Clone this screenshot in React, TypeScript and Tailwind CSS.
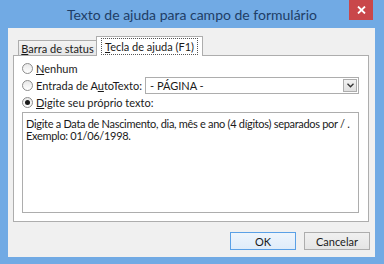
import React from "react";

function Radio({ checked }: { checked?: boolean }) {
  return (
    <span className="flex h-[11px] w-[11px] shrink-0 items-center justify-center rounded-full border border-[#8c8c8c] bg-gradient-to-b from-[#e8e8e8] to-[#ffffff]">
      {checked && <span className="h-[5px] w-[5px] rounded-full bg-[#1a1a1a]" />}
    </span>
  );
}

export default function App() {
  return (
    <div
      className="flex h-[264px] w-[384px] flex-col whitespace-nowrap bg-[#71aae4] text-[#1a1a1a]"
      style={{ fontFamily: 'Lato, "Liberation Sans", sans-serif' }}
    >
      {/* title bar */}
      <div className="relative flex h-[28px] shrink-0 items-center justify-center">
        <span className="pt-[1px] text-[14px] leading-none text-[#1e3d66]">
          Texto de ajuda para campo de formulário
        </span>
        <div className="absolute right-[11px] top-0 flex h-[20px] w-[24px] items-center justify-center bg-[#c9474a]">
          <svg width="9" height="8" viewBox="0 0 9 8">
            <path d="M1 0.5 L8 7.5 M8 0.5 L1 7.5" stroke="#ffffff" strokeWidth="1.8" />
          </svg>
        </div>
      </div>

      {/* client area */}
      <div className="ml-[8px] mr-[9px] flex h-[229px] flex-col bg-[#f0f0f0] pl-[5px] pr-[6px] pt-[8px] text-[11px] leading-none">
        {/* tabs */}
        <div className="relative z-10 flex h-[19px] items-end pl-[5px]">
          <div className="flex h-[15px] w-[79px] items-center justify-center border border-b-0 border-[#adadad] bg-gradient-to-b from-[#f3f3f3] to-[#e6e6e6]">
            <span><u>B</u>arra de status</span>
          </div>
          <div className="-mb-[1px] -ml-[1px] flex h-[20px] w-[107px] items-center justify-center border border-b-0 border-[#adadad] bg-white">
            <span className="border border-dotted border-[#555] px-[3px] py-[2px]"><u>T</u>ecla de ajuda (F1)</span>
          </div>
        </div>
        {/* panel */}
        <div className="flex h-[167px] flex-col border border-[#adadad] bg-white pl-[8px] pr-[9px] pt-[6px]">
          <div className="flex h-[12px] items-center gap-[3px]">
            <Radio />
            <span><u>N</u>enhum</span>
          </div>
          <div className="mt-[3px] flex h-[17px] items-center">
            <div className="flex w-[123px] items-center gap-[3px]">
              <Radio />
              <span>Entrada de A<u>u</u>toTexto:</span>
            </div>
            <div className="flex h-[17px] flex-1 items-center justify-between border border-[#adadad] bg-white pl-[4px]">
              <span>- PÁGINA -</span>
              <div className="mr-[1px] flex h-[13px] w-[14px] items-center justify-center border border-[#adadad] bg-gradient-to-b from-[#f2f2f2] to-[#e0e0e0]">
                <svg width="7" height="5" viewBox="0 0 7 5">
                  <path d="M0.5 0.8 L3.5 3.8 L6.5 0.8" stroke="#333" strokeWidth="1.3" fill="none" />
                </svg>
              </div>
            </div>
          </div>
          <div className="mt-[2px] flex h-[12px] items-center gap-[3px]">
            <Radio checked />
            <span><u>D</u>igite seu próprio texto:</span>
          </div>
          <div className="mt-[4px] h-[101px] border border-[#adadad] bg-white px-[3px] pt-[5px] leading-[12px] tracking-[-0.3px]">
            Digite a Data de Nascimento, dia, mês e ano (4 dígitos) separados por / .
            <br />
            Exemplo: 01/06/1998.
          </div>
        </div>
        {/* buttons */}
        <div className="mt-[10px] flex justify-end gap-[8px]">
          <button className="flex h-[18px] w-[66px] items-center justify-center border border-[#5aa0e6] bg-gradient-to-b from-[#eef5fc] to-[#dfecfa]">
            OK
          </button>
          <button className="mr-[-1px] flex h-[18px] w-[66px] items-center justify-center border border-[#adadad] bg-gradient-to-b from-[#f0f0f0] to-[#e5e5e5]">
            Cancelar
          </button>
        </div>
      </div>
    </div>
  );
}
